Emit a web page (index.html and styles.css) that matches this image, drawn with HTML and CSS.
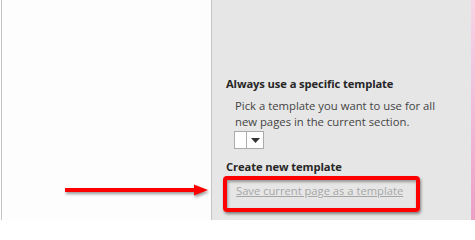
FILE: index.html
```html
<!DOCTYPE html>
<html>
<head>
<meta charset="utf-8">
<link rel="stylesheet" href="styles.css">
</head>
<body>
<div class="window">
  <div class="page-pane"></div>
  <div class="templates">
    <div class="heading">Always use a specific template</div>
    <div class="desc">Pick a template you want to use for all new pages in the current section.</div>
    <div class="dropdown">
      <span class="dd-value"></span>
      <span class="dd-btn"><svg width="9" height="5" viewBox="0 0 9 5"><polygon points="0,0 9,0 4.5,5" fill="#333"/></svg></span>
    </div>
    <div class="heading heading-create">Create new template</div>
    <a class="save-link">Save current page as a template</a>
  </div>
  <div class="pink-edge"></div>
</div>
<div class="callout-box"></div>
<svg class="callout-arrow" width="160" height="24" viewBox="60 180 160 24">
  <rect x="65" y="188" width="132" height="4" fill="#ff0000"/>
  <polygon points="194,184.5 208,190 194,195.5" fill="#ff0000"/>
</svg>
</body>
</html>
```

FILE: styles.css
```css
html, body {
  margin: 0;
  padding: 0;
  background: #ffffff;
}
body {
  width: 475px;
  height: 220px;
  overflow: hidden;
  position: relative;
  font-family: "Open Sans", "Noto Sans", sans-serif;
}
.window {
  display: flex;
  height: 220px;
}
.page-pane {
  margin-left: 1px;
  width: 209px;
  background: #fdfdfd;
  border-left: 1px solid #c4c4c4;
  border-right: 1px solid #c4c4c4;
}
.templates {
  flex: 1;
  background: #e6e6e6;
  padding: 76px 0 0 14px;
  display: flex;
  flex-direction: column;
  align-items: flex-start;
}
.heading {
  font-weight: bold;
  font-size: 11.2px;
  line-height: 16px;
  color: #262626;
  letter-spacing: -0.1px;
}
.desc {
  margin: 6px 0 0 9px;
  font-size: 11.3px;
  line-height: 16px;
  color: #444444;
  width: 215px;
}
.dropdown {
  margin: 1px 0 0 8px;
  display: flex;
  height: 18px;
  border: 1px solid #ababab;
  background: #ffffff;
  box-sizing: border-box;
}
.dd-value {
  width: 11px;
  border-right: 1px solid #ababab;
}
.dd-btn {
  width: 16px;
  display: flex;
  align-items: center;
  justify-content: center;
}
.heading-create {
  margin-top: 10px;
}
.save-link {
  margin: 8px 0 0 10px;
  font-size: 11.2px;
  line-height: 16px;
  color: #a6a6a6;
  text-decoration: underline;
}
.pink-edge {
  width: 4px;
  background: linear-gradient(#f9d3e6, #ee9dc4);
}
.callout-box {
  position: absolute;
  left: 223px;
  top: 176px;
  width: 189px;
  height: 28px;
  border: 4px solid #ff0000;
  border-radius: 4px;
  box-shadow: 1px 2px 3px rgba(0,0,0,0.45), inset 1px 2px 3px rgba(0,0,0,0.35);
}
.callout-arrow {
  position: absolute;
  left: 60px;
  top: 180px;
  filter: drop-shadow(1px 2px 1.5px rgba(0,0,0,0.4));
}
```
